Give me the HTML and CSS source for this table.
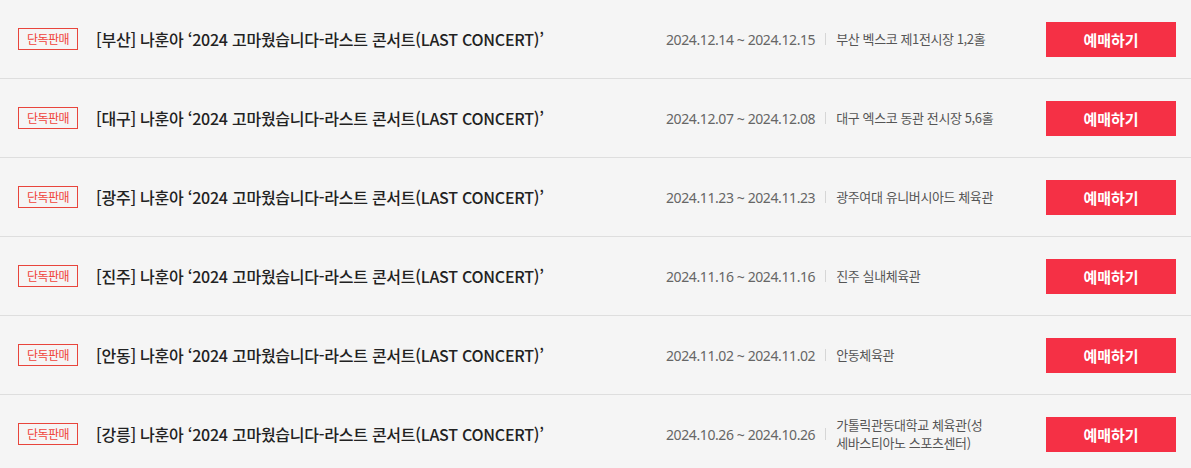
FILE: index.html
```html
<!DOCTYPE html>
<html lang="ko">
<head>
<meta charset="utf-8">
<link rel="stylesheet" href="styles.css">
</head>
<body>
<ul class="list">
  <li class="row">
    <span class="badge">단독판매</span>
    <p class="title">[부산] 나훈아 ‘2024 고마웠습니다-라스트 콘서트(LAST CONCERT)’</p>
    <div class="meta">
      <span class="date">2024.12.14 ~ 2024.12.15</span>
      <span class="sep"></span>
      <span class="venue">부산 벡스코 제1전시장 1,2홀</span>
    </div>
    <a class="btn">예매하기</a>
  </li>
  <li class="row">
    <span class="badge">단독판매</span>
    <p class="title">[대구] 나훈아 ‘2024 고마웠습니다-라스트 콘서트(LAST CONCERT)’</p>
    <div class="meta">
      <span class="date">2024.12.07 ~ 2024.12.08</span>
      <span class="sep"></span>
      <span class="venue">대구 엑스코 동관 전시장 5,6홀</span>
    </div>
    <a class="btn">예매하기</a>
  </li>
  <li class="row">
    <span class="badge">단독판매</span>
    <p class="title">[광주] 나훈아 ‘2024 고마웠습니다-라스트 콘서트(LAST CONCERT)’</p>
    <div class="meta">
      <span class="date">2024.11.23 ~ 2024.11.23</span>
      <span class="sep"></span>
      <span class="venue">광주여대 유니버시아드 체육관</span>
    </div>
    <a class="btn">예매하기</a>
  </li>
  <li class="row">
    <span class="badge">단독판매</span>
    <p class="title">[진주] 나훈아 ‘2024 고마웠습니다-라스트 콘서트(LAST CONCERT)’</p>
    <div class="meta">
      <span class="date">2024.11.16 ~ 2024.11.16</span>
      <span class="sep"></span>
      <span class="venue">진주 실내체육관</span>
    </div>
    <a class="btn">예매하기</a>
  </li>
  <li class="row">
    <span class="badge">단독판매</span>
    <p class="title">[안동] 나훈아 ‘2024 고마웠습니다-라스트 콘서트(LAST CONCERT)’</p>
    <div class="meta">
      <span class="date">2024.11.02 ~ 2024.11.02</span>
      <span class="sep"></span>
      <span class="venue">안동체육관</span>
    </div>
    <a class="btn">예매하기</a>
  </li>
  <li class="row">
    <span class="badge">단독판매</span>
    <p class="title">[강릉] 나훈아 ‘2024 고마웠습니다-라스트 콘서트(LAST CONCERT)’</p>
    <div class="meta">
      <span class="date">2024.10.26 ~ 2024.10.26</span>
      <span class="sep"></span>
      <span class="venue">가톨릭관동대학교 체육관(성 세바스티아노 스포츠센터)</span>
    </div>
    <a class="btn">예매하기</a>
  </li>
</ul>
</body>
</html>
```

FILE: styles.css
```css
html, body {
  margin: 0;
  padding: 0;
  background: #f5f5f5;
  font-family: "Noto Sans CJK KR", "Noto Sans", sans-serif;
}
.list {
  list-style: none;
  margin: 0;
  padding: 0;
}
.row {
  display: flex;
  align-items: center;
  height: 78px;
  padding: 0 15px 0 18px;
  border-bottom: 1px solid #dedede;
}
.badge {
  box-sizing: border-box;
  flex: none;
  width: 60px;
  height: 22px;
  border: 1px solid #e8453c;
  color: #f0433a;
  font-size: 12px;
  line-height: 20px;
  text-align: center;
  letter-spacing: -0.5px;
}
.title {
  flex: 1;
  margin: 0 0 0 18px;
  font-size: 16px;
  font-weight: 500;
  color: #222;
  letter-spacing: -0.25px;
  white-space: nowrap;
}
.meta {
  flex: none;
  width: 380px;
  display: flex;
  align-items: center;
}
.date {
  font-size: 14px;
  color: #666;
  font-family: "Noto Sans", sans-serif;
  letter-spacing: -0.4px;
}
.sep {
  width: 1px;
  height: 12px;
  background: #d6d6d6;
  margin: 0 10px;
}
.venue {
  width: 168px;
  font-size: 13px;
  line-height: 18px;
  color: #555;
  letter-spacing: -0.4px;
  word-break: keep-all;
}
.btn {
  flex: none;
  width: 130px;
  height: 35px;
  background: #f53045;
  color: #fff;
  font-size: 15px;
  font-weight: 700;
  line-height: 35px;
  text-align: center;
}
```
